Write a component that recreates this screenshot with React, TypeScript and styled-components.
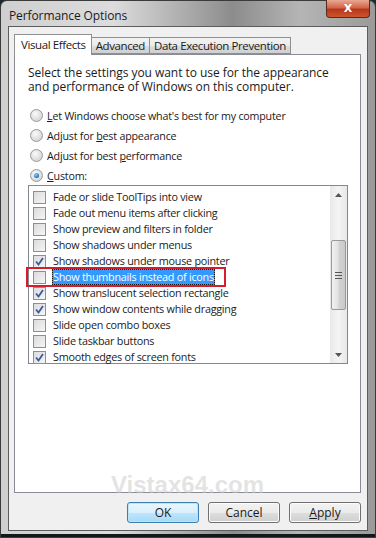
import React from 'react';
import styled, {createGlobalStyle} from 'styled-components';

const Global = createGlobalStyle`
html,body{margin:0;padding:0;background:#1c2a30;}
body{width:376px;height:538px;overflow:hidden;font-family:"Open Sans","Noto Sans","DejaVu Sans",sans-serif;}
`;

const Frame = styled.div`
width:376px;height:538px;box-sizing:border-box;
background:linear-gradient(90deg,#cfcfcf 0%,#dcdcdc 30%,#8c8c8c 62%,#b5b5b5 80%,#9a9a9a 100%);
border:1px solid #3b3b3b;border-radius:7px 7px 0 0;
display:flex;flex-direction:column;padding:0 7px 6px 7px;
box-shadow:inset 0 -3px 0 #10181c;
`;
const TitleBar = styled.div`
height:25px;display:flex;align-items:flex-start;justify-content:space-between;
`;
const Title = styled.div`
font-size:12px;color:#1a1a1a;padding:6px 0 0 1px;letter-spacing:-0.1px;
`;
const Close = styled.div`
width:42px;height:17px;margin-right:-2px;margin-top:-1px;
border:1px solid #5a2a20;border-top:none;border-radius:0 0 4px 4px;
background:linear-gradient(#e9a892 0%,#d2664a 45%,#b8351c 55%,#c9572d 100%);
display:flex;align-items:center;justify-content:center;
color:#fff;font:bold 11px "DejaVu Sans",sans-serif;
`;
const Client = styled.div`
flex:1;background:#f0f0f0;border:1px solid #5c5c5c;
display:flex;flex-direction:column;padding:7px 6px 7px 5px;
`;
const Tabs = styled.div`
display:flex;align-items:flex-end;height:20px;position:relative;z-index:1;
`;
const Tab = styled.div<{$active?: boolean}>`
font-size:11.5px;letter-spacing:-0.4px;color:#1a1a1a;box-sizing:border-box;
border:1px solid #8e8f8f;border-bottom:${p => p.$active ? 'none' : '1px solid #8e8f8f'};
margin-left:${p => p.$active ? '0' : '-1px'};
background:${p => p.$active ? '#fff' : 'linear-gradient(#f2f2f2,#ebebeb 50%,#dddddd 51%,#cfcfcf)'};
height:${p => p.$active ? '21px' : '17px'};
padding:${p => p.$active ? '2px 5px 0 6px' : '0 4px'};
margin-bottom:${p => p.$active ? '-1px' : '0'};
line-height:15px;
`;
const Panel = styled.div`
height:439px;box-sizing:border-box;background:#fff;border:1px solid #898c95;
padding:11px 0 0 13px;display:flex;flex-direction:column;
`;
const Intro = styled.div`
font-size:12px;line-height:14px;color:#1a1a1a;width:310px;letter-spacing:-0.05px;
`;
const Radios = styled.div`
display:flex;flex-direction:column;gap:7px;margin-top:15px;
`;
const RadioRow = styled.div`
display:flex;align-items:center;gap:4px;font-size:10.7px;letter-spacing:-0.2px;height:13px;color:#1a1a1a;padding-left:2px;
`;
const RadioDot = styled.span<{$on?: boolean}>`
width:11px;height:11px;border-radius:50%;border:1px solid #9a9a9a;
background:radial-gradient(circle at 40% 35%,#fafafa,#d8d8d8 70%,#c4c4c4);
display:flex;align-items:center;justify-content:center;
&::after{content:'';width:5px;height:5px;border-radius:50%;
  background:${p => p.$on ? 'radial-gradient(circle at 40% 35%,#8fd2ff,#1b6fc0 70%,#0c4a8c)' : 'transparent'};}
`;
const ListBox = styled.div`
margin-top:3px;width:320px;height:179px;box-sizing:border-box;
border:1px solid #828790;display:flex;background:#fff;
`;
const Rows = styled.div`
flex:1;padding:3px 0 0 4px;display:flex;flex-direction:column;
font-family:"Open Sans",sans-serif;
`;
const Row = styled.div`
height:16px;display:flex;align-items:center;gap:6px;color:#1a1a1a;
`;
const Label = styled.span<{$sel?: boolean}>`
padding:0 1px;line-height:16px;font-size:10.8px;letter-spacing:-0.25px;
background:${p => p.$sel ? '#3399ff' : 'transparent'};
color:${p => p.$sel ? '#fff' : '#1a1a1a'};
outline:${p => p.$sel ? '1px dotted #1a1a1a' : 'none'};outline-offset:-1px;
`;
const Marked = styled.div`
box-sizing:border-box;margin:-2px 0 -2px -7px;padding:0 9px 0 5px;border:2px solid #d21f2b;
display:flex;align-items:center;gap:6px;height:20px;width:max-content;
`;
const Box = styled.span`
width:11px;height:11px;border:1px solid #8f8f8f;display:flex;align-items:center;justify-content:center;
background:linear-gradient(135deg,#dcdcdc,#f4f4f4);flex:none;
`;
const Scroll = styled.div`
width:17px;display:flex;flex-direction:column;align-items:center;
background:linear-gradient(90deg,#e8e8e8,#f4f4f4 50%,#e8e8e8);
`;
const Arrow = styled.div`
height:17px;display:flex;align-items:center;justify-content:center;
`;
const Track = styled.div`
flex:1;width:100%;display:flex;flex-direction:column;
`;
const Thumb = styled.div`
margin:37px 1px 0 1px;height:68px;border:1px solid #999;border-radius:2px;
background:linear-gradient(90deg,#f2f2f2,#e2e2e2 45%,#d2d2d2 55%,#c9c9c9);
display:flex;align-items:center;justify-content:center;
`;
const Buttons = styled.div`
display:flex;justify-content:flex-end;gap:9px;margin-top:9px;position:relative;
`;
const Btn = styled.button<{$def?: boolean}>`
width:72px;height:21px;box-sizing:border-box;border-radius:3px;
border:1px solid ${p => p.$def ? '#3c7fb1' : '#707070'};
background:${p => p.$def
  ? 'linear-gradient(#eaf6fd,#d9f0fc 50%,#bee6fd 51%,#a7d9f5)'
  : 'linear-gradient(#f2f2f2,#ebebeb 50%,#dddddd 51%,#cfcfcf)'};
box-shadow:inset 0 0 0 1px ${p => p.$def ? '#bde4f5' : '#fcfcfc'};
font:12px "Open Sans","Noto Sans",sans-serif;color:#1a1a1a;padding:0;
`;
const Watermark = styled.div`
position:absolute;left:97px;top:-31px;
font:bold 24px "Liberation Sans",Arial,sans-serif;color:rgba(200,200,200,0.5);
`;

const Check = () => (
  <svg width="9" height="9" viewBox="0 0 9 9">
    <path d="M1 4.5 L3.5 7.5 L8 1" fill="none" stroke="#3c5a9a" strokeWidth="1.8"/>
  </svg>
);

const items: [string, boolean][] = [
  ['Fade or slide ToolTips into view', false],
  ['Fade out menu items after clicking', false],
  ['Show preview and filters in folder', false],
  ['Show shadows under menus', false],
  ['Show shadows under mouse pointer', true],
  ['Show thumbnails instead of icons', false],
  ['Show translucent selection rectangle', true],
  ['Show window contents while dragging', true],
  ['Slide open combo boxes', false],
  ['Slide taskbar buttons', false],
  ['Smooth edges of screen fonts', true],
];

const U = ({c}: {c: string}) => <u style={{textDecorationThickness: '1px'}}>{c}</u>;

export default function App() {
  return (
    <Frame>
      <Global/>
      <TitleBar>
        <Title>Performance Options</Title>
        <Close>X</Close>
      </TitleBar>
      <Client>
        <Tabs>
          <Tab $active>Visual Effects</Tab>
          <Tab>Advanced</Tab>
          <Tab>Data Execution Prevention</Tab>
        </Tabs>
        <Panel>
          <Intro>Select the settings you want to use for the appearance and performance of Windows on this computer.</Intro>
          <Radios>
            <RadioRow><RadioDot/><span><U c="L"/>et Windows choose what's best for my computer</span></RadioRow>
            <RadioRow><RadioDot/><span>Adjust for <U c="b"/>est appearance</span></RadioRow>
            <RadioRow><RadioDot/><span>Adjust for best <U c="p"/>erformance</span></RadioRow>
            <RadioRow><RadioDot $on/><span><U c="C"/>ustom:</span></RadioRow>
          </Radios>
          <ListBox>
            <Rows>
              {items.map(([t, on], i) => i === 5
                ? <Marked key={t}><Box/><Label $sel>{t}</Label></Marked>
                : <Row key={t}><Box>{on && <Check/>}</Box><Label>{t}</Label></Row>)}
            </Rows>
            <Scroll>
              <Arrow><svg width="7" height="4"><path d="M0 4 L3.5 0 L7 4Z" fill="#555"/></svg></Arrow>
              <Track>
                <Thumb>
                  <svg width="7" height="7"><path d="M0 .5H7M0 3.5H7M0 6.5H7" stroke="#555"/></svg>
                </Thumb>
              </Track>
              <Arrow><svg width="7" height="4"><path d="M0 0 L3.5 4 L7 0Z" fill="#555"/></svg></Arrow>
            </Scroll>
          </ListBox>
        </Panel>
        <Buttons>
          <Watermark>Vistax64.com</Watermark>
          <Btn $def>OK</Btn>
          <Btn>Cancel</Btn>
          <Btn><U c="A"/>pply</Btn>
        </Buttons>
      </Client>
    </Frame>
  );
}
